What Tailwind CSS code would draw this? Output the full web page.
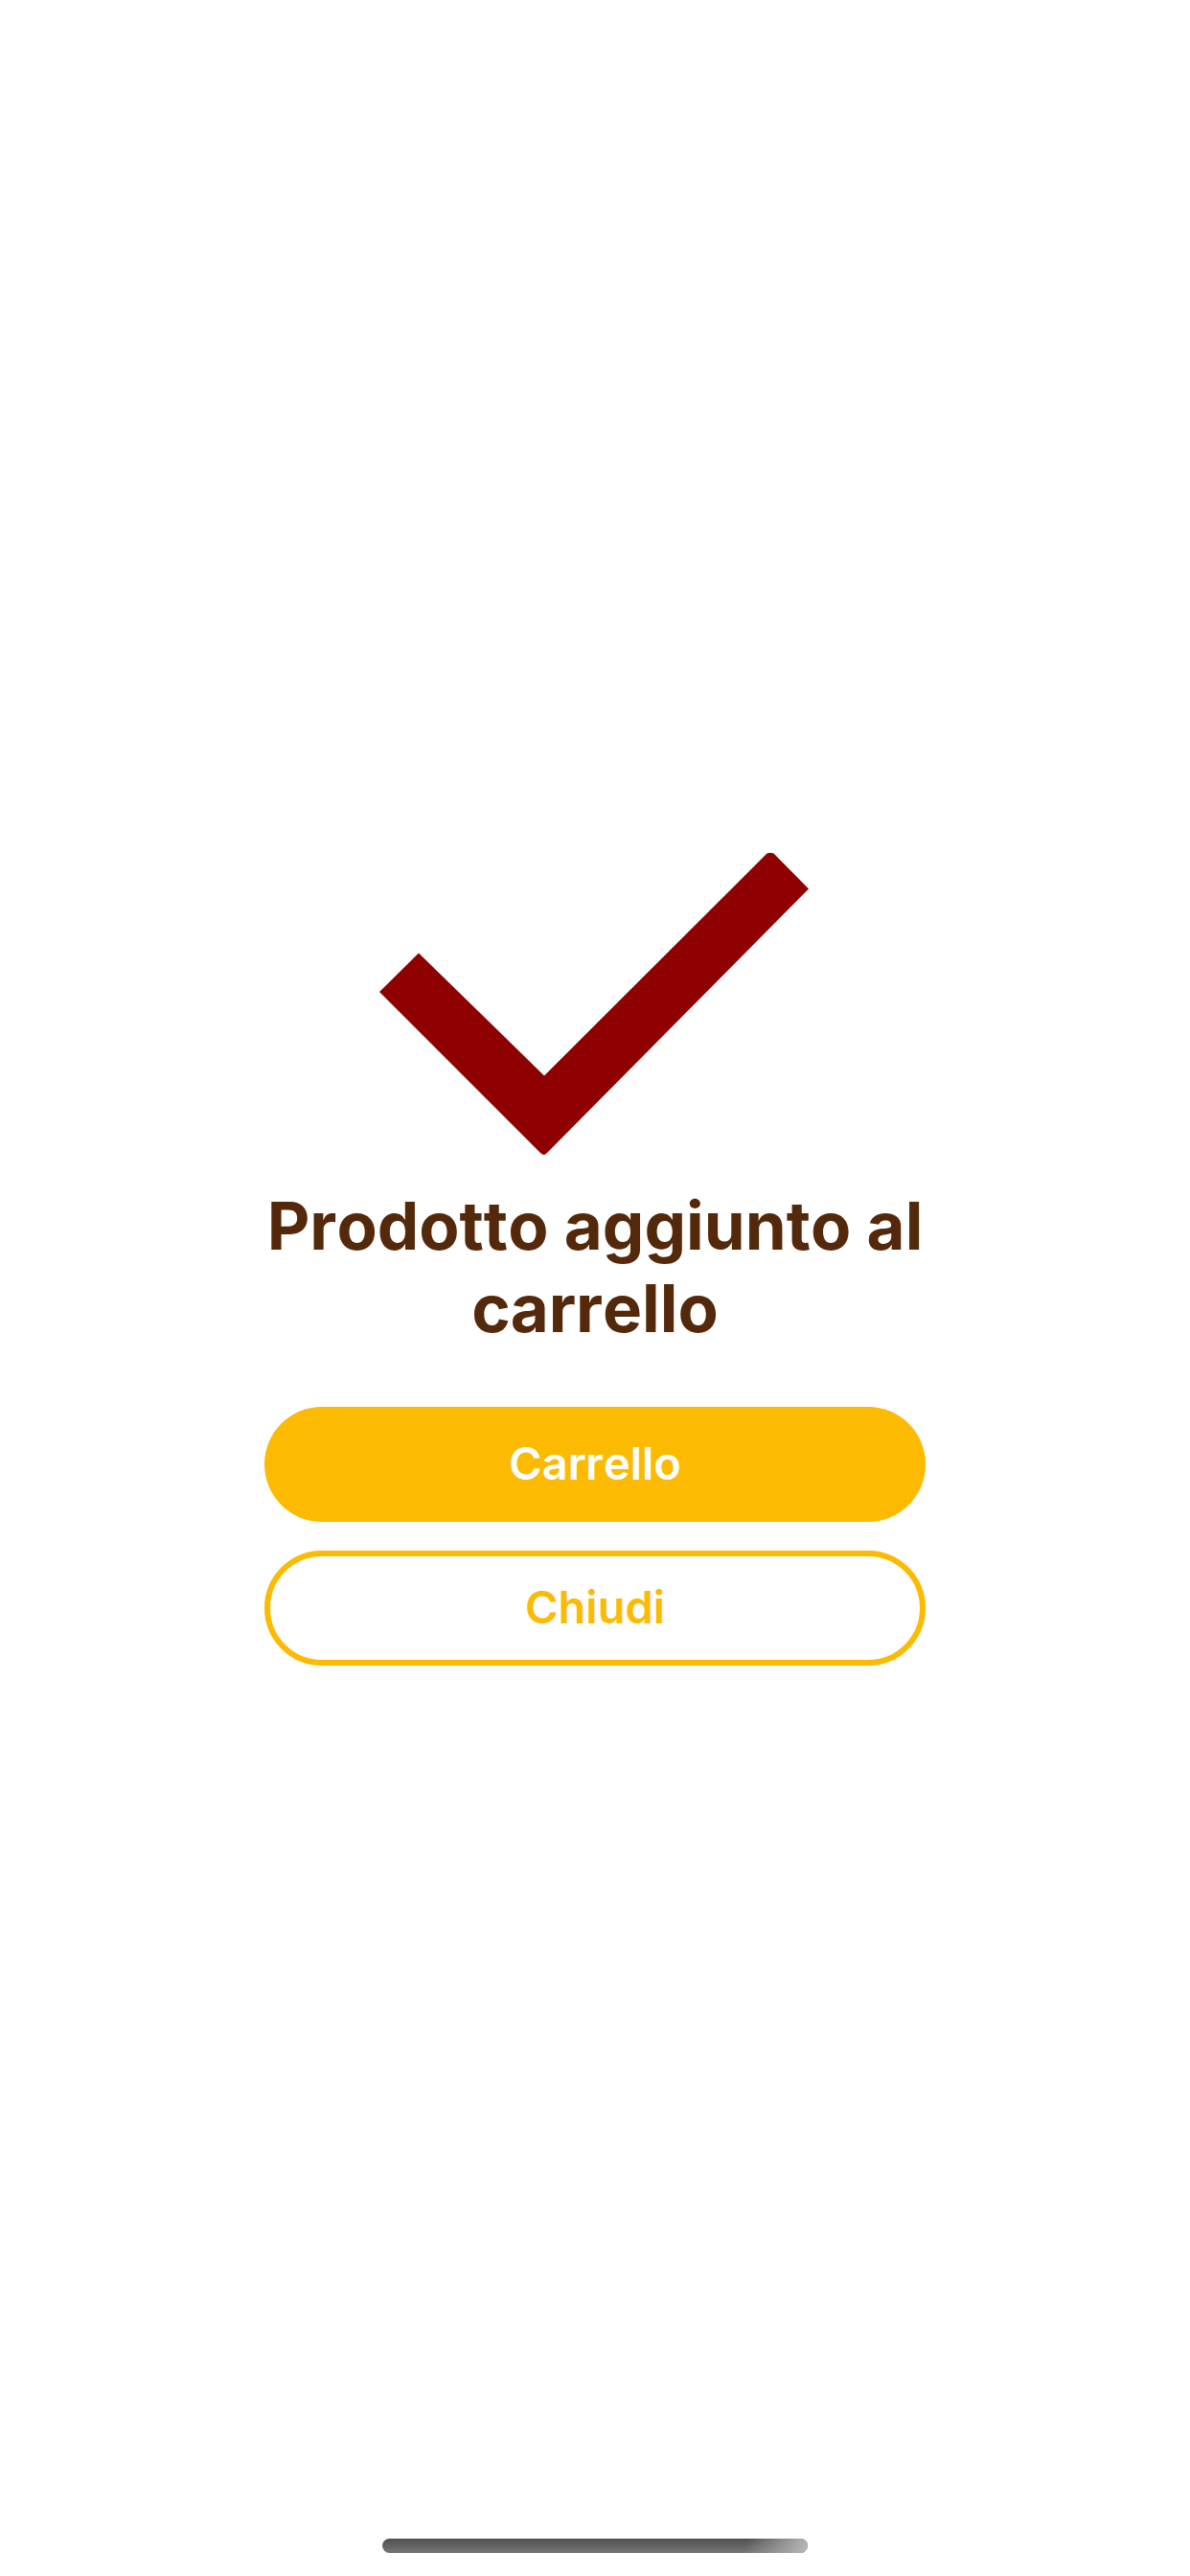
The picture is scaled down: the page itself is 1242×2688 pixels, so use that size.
<!DOCTYPE html>
<html lang="it">
  <head>
    <meta charset="UTF-8" />
    <meta name="viewport" content="width=device-width, initial-scale=1.0" />
    <script src="https://cdn.jsdelivr.net/npm/@tailwindcss/browser@4"></script>
    <title>Prodotto aggiunto al carrello</title>
  </head>

  <body class="min-h-screen flex flex-col bg-white font-['Inter',sans-serif] [font-kerning:none]">
    <main class="flex-1 flex flex-col items-center justify-center px-6">
      <svg class="w-[450px] h-[315px]" viewBox="0 0 450 315" fill="#8f0000" aria-hidden="true">
        <path d="M0 145 41 104.500 172 232.500 404 1Q405 0 407 0H409Q411 0 412 1L448 37.500 175 313Q173 315 172 315 170 315 168 313Z" />
      </svg>
      <h1 class="mt-[31px] w-full max-w-[690px] text-center text-[69px] leading-[86px] font-bold text-[#54290b]">
        Prodotto aggiunto al carrello
      </h1>
      <!-- Azioni -->
      <div class="mt-[60px] w-full max-w-[690px] flex flex-col gap-[30px] text-[47px] font-semibold">
        <button type="button" class="h-[120px] pb-0.5 rounded-full bg-[#fcba03] text-white cursor-pointer">
          Carrello
        </button>
        <button type="button" class="h-[120px] pb-0.5 rounded-full border-6 border-[#fcba03] text-[#fcba03] cursor-pointer">
          Chiudi
        </button>
      </div>
    </main>
    <!-- Home indicator -->
    <footer class="flex justify-center pt-[21px] pb-6">
      <div class="w-[444px] h-[15px] rounded-full overflow-hidden bg-linear-to-b from-[#505050] to-[#757575]">
        <div class="ml-auto w-20 h-full bg-linear-[100deg] from-transparent from-20% to-[#b8b8b8]"></div>
      </div>
    </footer>
  </body>
</html>
